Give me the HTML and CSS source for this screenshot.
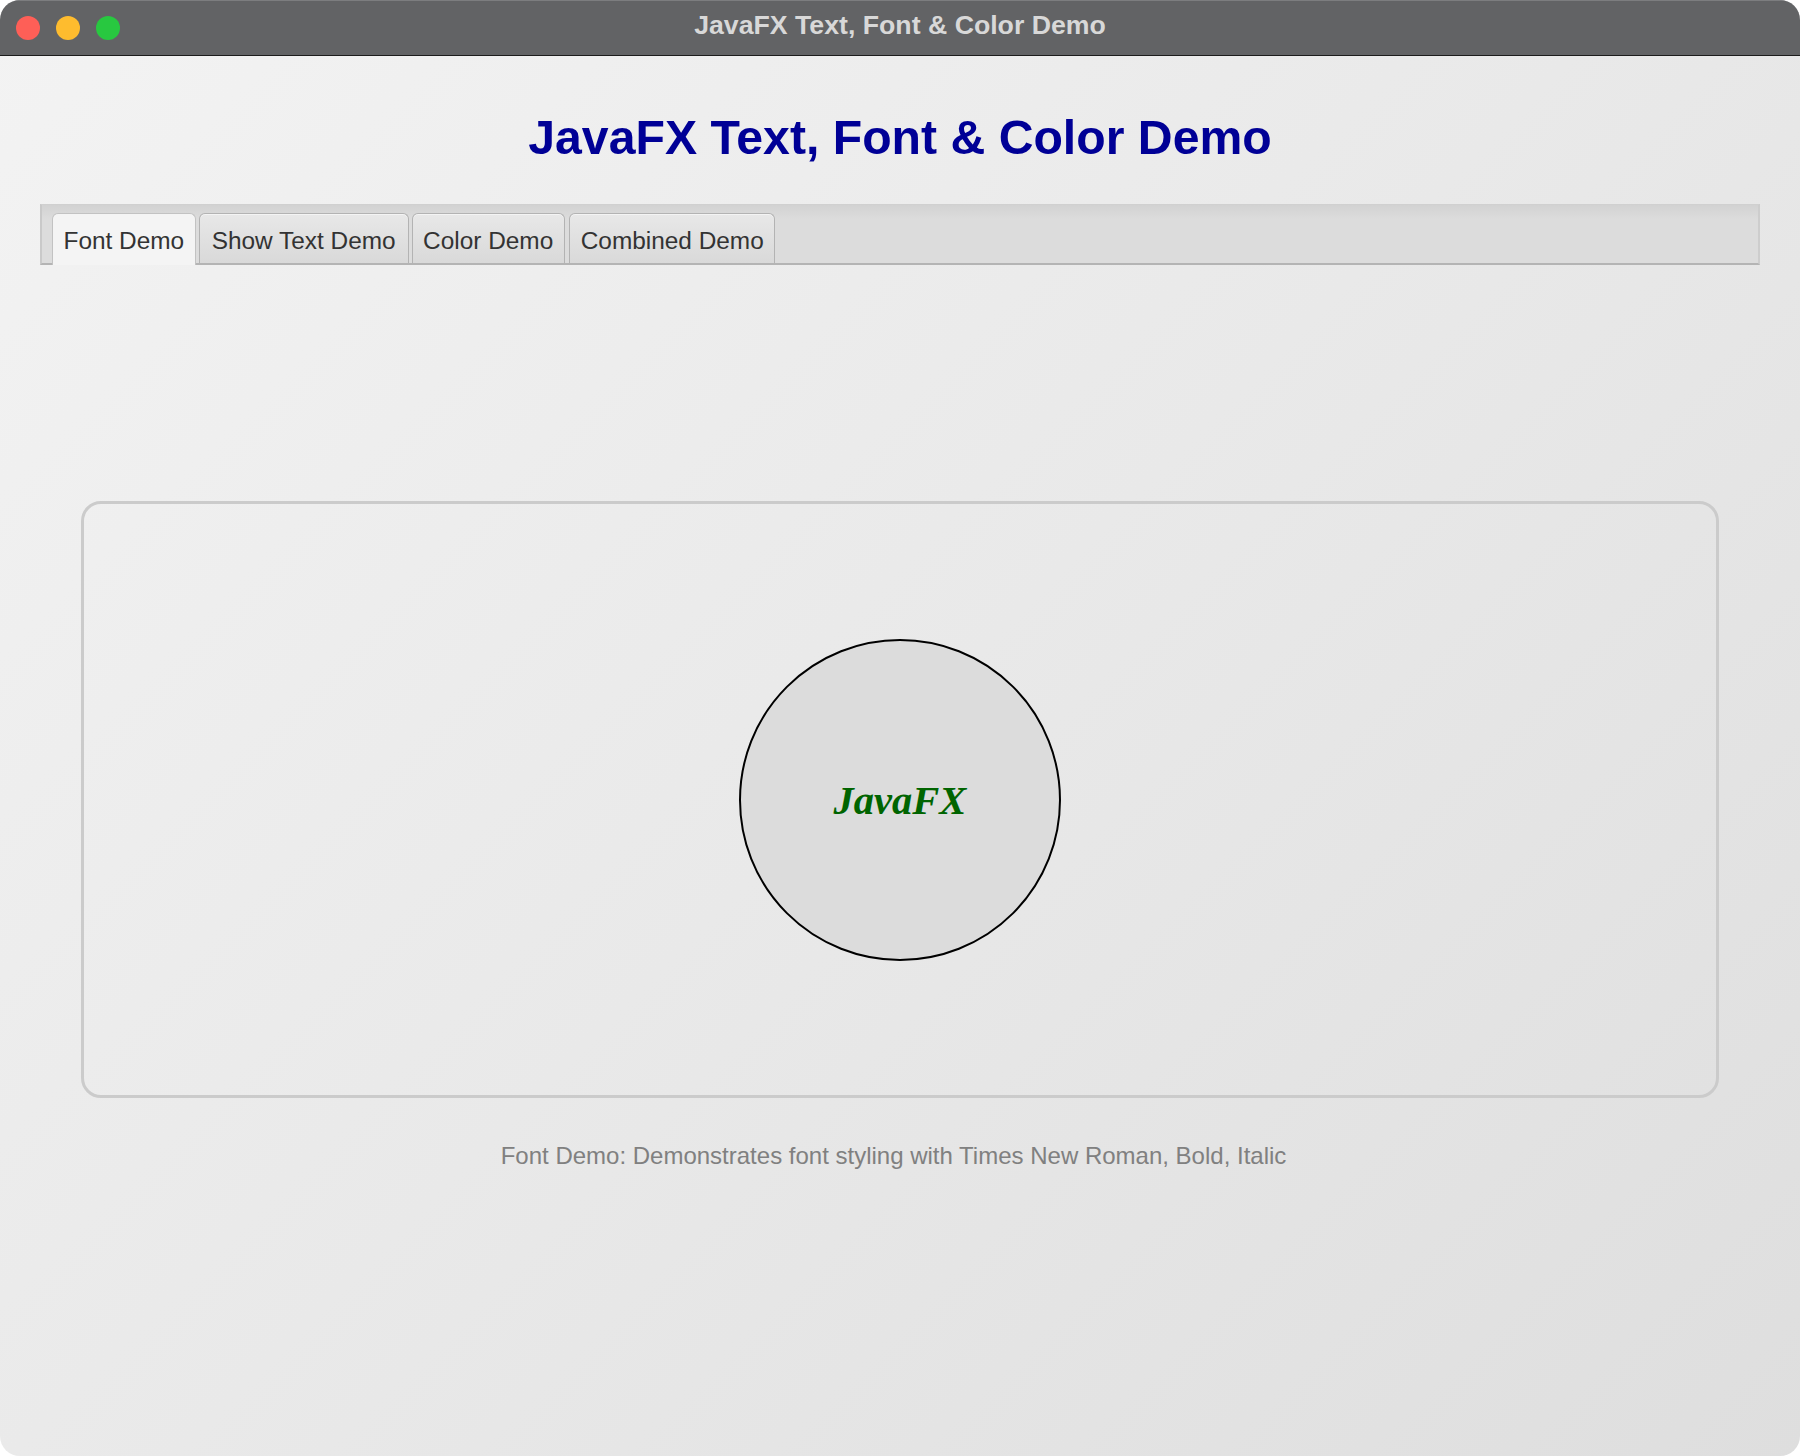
FILE: index.html
```html
<!DOCTYPE html>
<html lang="en">
<head>
<meta charset="utf-8">
<title>JavaFX Text, Font &amp; Color Demo</title>
<link rel="stylesheet" href="styles.css">
</head>
<body>
<div class="window">
  <header class="titlebar">
    <div class="lights">
      <span class="light red"></span>
      <span class="light yellow"></span>
      <span class="light green"></span>
    </div>
    <div class="wintitle">JavaFX Text, Font &amp; Color Demo</div>
    <div></div>
  </header>
  <main class="main">
    <h1 class="heading">JavaFX Text, Font &amp; Color Demo</h1>
    <section class="tabpane">
      <nav class="tabheader">
        <div class="tab selected">Font Demo</div>
        <div class="tab">Show Text Demo</div>
        <div class="tab">Color Demo</div>
        <div class="tab">Combined Demo</div>
      </nav>
      <div class="tabcontent">
        <div class="stage">
          <div class="circle"><span class="javafx">JavaFX</span></div>
        </div>
        <p class="caption">Font Demo: Demonstrates font styling with Times New Roman, Bold, Italic</p>
      </div>
    </section>
  </main>
</div>
</body>
</html>
```
FILE: styles.css
```css
* { box-sizing: border-box; }
html, body { margin: 0; padding: 0; }
body {
  background: #ffffff;
  width: 1800px;
  height: 1456px;
  overflow: hidden;
}
.window {
  width: 1800px;
  height: 1456px;
  border-radius: 20px;
  overflow: hidden;
  background: linear-gradient(135deg, #f3f3f3 0%, #e9e9e9 50%, #dedede 100%);
  display: flex;
  flex-direction: column;
}
.titlebar {
  height: 56px;
  flex: none;
  background: #626365;
  border-top: 1px solid #7c7d7f;
  border-bottom: 1px solid #1c1c1c;
  display: grid;
  grid-template-columns: 1fr auto 1fr;
  align-items: center;
}
.lights {
  display: flex;
  gap: 16px;
  padding-left: 16px;
}
.light {
  width: 24px;
  height: 24px;
  border-radius: 50%;
  display: block;
}
.red { background: #fe5f57; }
.yellow { background: #febc2e; }
.green { background: #28c840; }
.wintitle {
  font-family: "Liberation Sans", Arial, sans-serif;
  font-weight: bold;
  font-size: 26.7px;
  color: #d8d8d8;
  line-height: 30px;
  padding-bottom: 6px;
}
.main {
  flex: 1;
  padding: 0 40px;
  display: flex;
  flex-direction: column;
}
.heading {
  margin: 57px 0 0 0;
  font-family: "Liberation Sans", Arial, sans-serif;
  font-weight: bold;
  font-size: 48.2px;
  line-height: 48px;
  color: #000096;
  text-align: center;
}
.tabpane {
  margin-top: 43px;
  display: flex;
  flex-direction: column;
}
.tabheader {
  height: 61px;
  display: flex;
  align-items: flex-end;
  gap: 3px;
  padding-left: 10px;
  background: linear-gradient(to bottom, #d2d2d2 0px, #dcdcdc 14px, #dcdcdc 100%);
  border-left: 2px solid #c9c9c9;
  border-right: 2px solid #cdcdcd;
  border-bottom: 2px solid #b4b4b4;
  border-top: 1px solid #d0d0d0;
}
.tab {
  height: 50px;
  padding: 4px 10.5px 0 10.5px;
  border: 1px solid #b3b3b3;
  border-bottom: none;
  border-radius: 6px 6px 0 0;
  background: linear-gradient(to bottom, #e8e8e8, #d9d9d9);
  box-shadow: inset 0 1px 0 #f4f4f4;
  font-family: "Liberation Sans", Arial, sans-serif;
  font-size: 24.4px;
  color: #333333;
  display: flex;
  align-items: center;
  white-space: nowrap;
}
.tab:nth-child(2) { padding: 4px 12px 0 12px; }
.tab:nth-child(4) { margin-left: 1.5px; }
.tab.selected {
  background: #f4f4f4;
  border-color: #c2c2c2;
  height: 52px;
  margin-bottom: -2px;
  padding-bottom: 2px;
  box-shadow: none;
}
.tabcontent {
  display: flex;
  flex-direction: column;
  align-items: stretch;
}
.stage {
  margin: 236px 41px 0 41px;
  height: 597px;
  border: 3px solid #cbcbcb;
  border-radius: 20px;
  display: flex;
  align-items: center;
  justify-content: center;
}
.circle {
  width: 322px;
  height: 322px;
  border-radius: 50%;
  border: 2px solid #000000;
  background: #dcdcdc;
  display: flex;
  align-items: center;
  justify-content: center;
}
.javafx {
  font-family: "Liberation Serif", "Times New Roman", serif;
  font-weight: bold;
  font-style: italic;
  font-size: 40.5px;
  line-height: 40px;
  color: #006400;
  padding-top: 2px;
}
.caption {
  margin: 44px 0 0 0;
  font-family: "Liberation Sans", Arial, sans-serif;
  font-size: 24px;
  line-height: 28px;
  color: #808080;
  text-align: center;
  padding-right: 13px;
}
```
